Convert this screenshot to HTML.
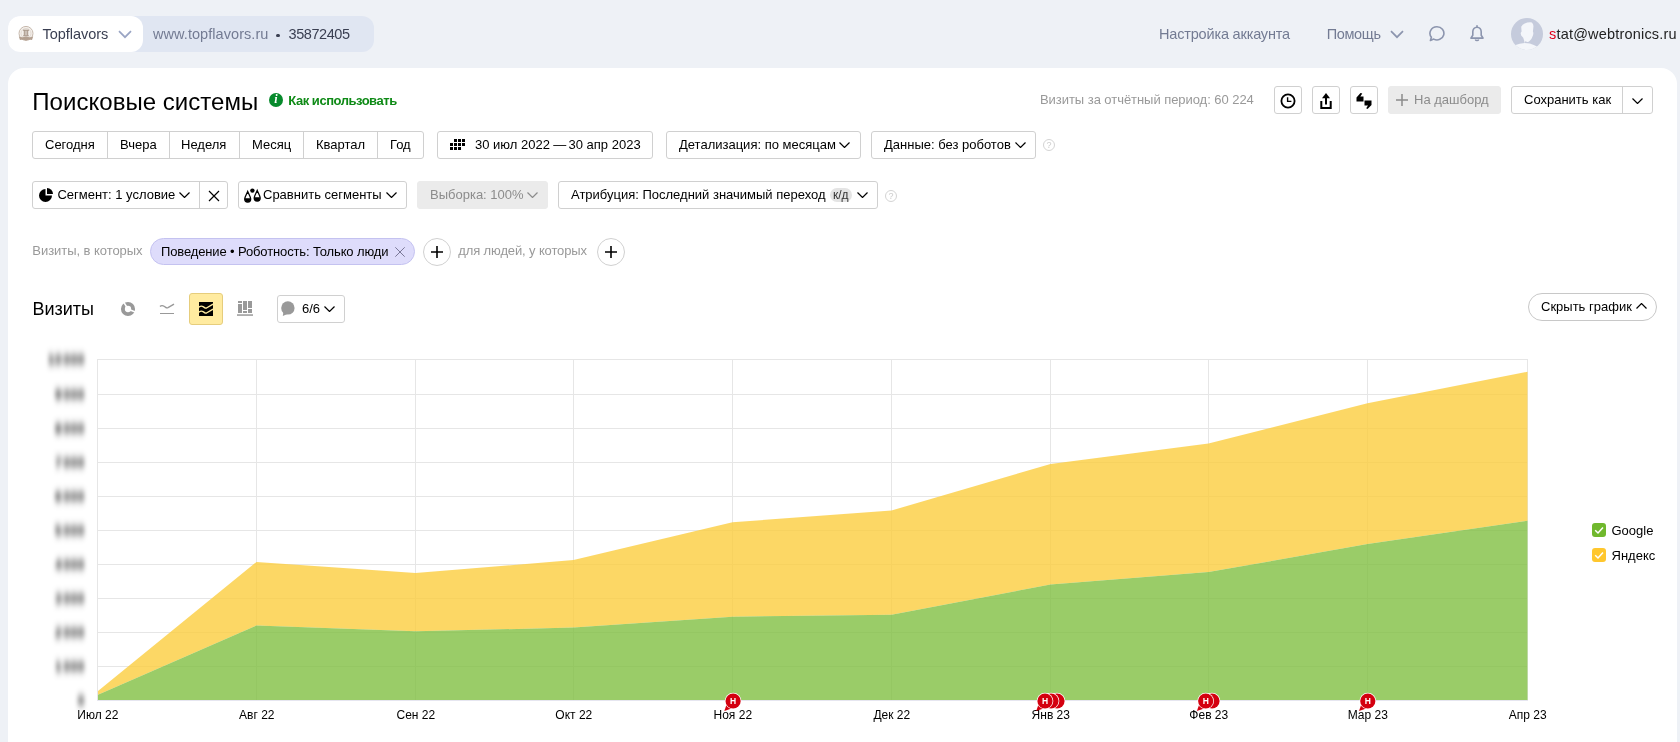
<!DOCTYPE html>
<html lang="ru">
<head>
<meta charset="utf-8">
<title>Поисковые системы</title>
<style>
*{box-sizing:border-box;margin:0;padding:0}
html,body{width:1680px;height:742px;overflow:hidden}
body{background:#eef1f6;font-family:"Liberation Sans",sans-serif;font-size:13px;color:#000;position:relative}
.abs{position:absolute;white-space:nowrap}
.panel{position:absolute;left:8px;top:68px;width:1669px;height:700px;background:#fff;border-radius:16px 16px 0 0}
/* top bar */
.pill{position:absolute;left:8px;top:16px;width:366px;height:36px;background:#e0e6f2;border-radius:12px}
.pillw{position:absolute;left:8px;top:16px;width:135px;height:36px;background:#fff;border-radius:12px}
.t15{font-size:14.5px;line-height:18px}
/* buttons */
.btn{position:absolute;height:28px;border:1px solid #d0d0d0;border-radius:3px;background:#fff;font-size:13px;line-height:26px;white-space:nowrap;color:#000}
.btn.dis{background:#ebebeb;border-color:#ebebeb;color:#8c8c8c}
.seg{position:absolute;top:0;height:26px;border-left:1px solid #d0d0d0}
.round{position:absolute;width:28px;height:28px;border:1px solid #d0d0d0;border-radius:50%;background:#fff}
.gray{color:#999}
.lh28{font-size:13px;line-height:28px}
.q{width:12px;height:12px;border:1px solid #d4d4d4;border-radius:50%;font-size:9px;line-height:10px;text-align:center;color:#ccc}
</style>
</head>
<body>
<div id="root" style="will-change:transform;position:absolute;left:0;top:0;width:1680px;height:742px;overflow:hidden">
<!-- TOP BAR -->
<div class="pill"></div>
<div class="pillw"></div>
<div class="abs t15" id="tf" style="left:42.5px;top:25px;color:#3a3f52;letter-spacing:-0.03px">Topflavors</div>
<div class="abs t15" id="url" style="left:153px;top:25px;color:#737b93;letter-spacing:0.06px">www.topflavors.ru</div>
<div class="abs" style="left:276px;top:33.500px;width:3.500px;height:3.500px;border-radius:50%;background:#3a3f52"></div>
<div class="abs t15" id="cid" style="left:288.6px;top:25px;color:#3a3f52;letter-spacing:-0.45px">35872405</div>
<div class="abs t15" id="acc" style="left:1159px;top:25px;color:#737b93;letter-spacing:-0.18px">Настройка аккаунта</div>
<div class="abs t15" id="help" style="left:1326.7px;top:25px;color:#737b93;letter-spacing:-0.34px">Помощь</div>
<div class="abs t15" id="mail" style="left:1549px;top:25px;color:#222;letter-spacing:0.19px"><span style="color:#e0001a">s</span>tat@webtronics.ru</div>

<!-- PANEL -->
<div class="panel"></div>

<div class="abs" id="title" style="left:32.3px;top:87.500px;font-size:24px;line-height:28px;letter-spacing:0.04px">Поисковые системы</div>
<div class="abs" id="how" style="left:288.3px;top:92.500px;font-size:13px;line-height:16px;color:#0e8a16;font-weight:bold;letter-spacing:-0.47px">Как использовать</div>
<div class="abs gray" id="vis" style="left:1040px;top:92px;font-size:13px;line-height:16px;letter-spacing:-0.05px">Визиты за отчётный период: 60 224</div>

<!-- ROW1 right buttons -->
<div class="btn" style="left:1274px;top:86px;width:28px"></div>
<div class="btn" style="left:1312px;top:86px;width:28px"></div>
<div class="btn" style="left:1350px;top:86px;width:28px"></div>
<svg class="abs" style="left:1274px;top:86px" width="28" height="28" viewBox="0 0 28 28"><circle cx="14" cy="15" r="6.6" fill="none" stroke="#000" stroke-width="1.8"/><path d="M13.6 11.2V15.4H17.4" fill="none" stroke="#000" stroke-width="1.4"/></svg>
<svg class="abs" style="left:1312px;top:86px" width="28" height="28" viewBox="0 0 28 28"><path d="M9.3 15v7h9.4v-7" fill="none" stroke="#000" stroke-width="2"/><path d="M14 18.5V11" stroke="#000" stroke-width="2"/><path d="M14 7l4 5.2h-8z" fill="#000"/></svg>
<svg class="abs" style="left:1350px;top:86px" width="28" height="28" viewBox="0 0 28 28"><path d="M10.5 7l-4 4.5v4h7v-5h-3.2l2-3z" fill="#000"/><path d="M14.5 14.5h7v4.5l-4 4-1.3-0.8 1.8-2.7h-3.5z" fill="#000"/></svg>
<div class="btn dis" style="left:1388px;top:86px;width:113px"></div>
<svg class="abs" style="left:1396px;top:94px" width="12" height="12" viewBox="0 0 12 12"><path d="M6 0v12M0 6h12" stroke="#8c8c8c" stroke-width="1.5"/></svg>
<div class="abs lh28" id="dash" style="left:1414px;top:86px;color:#8c8c8c">На дашборд</div>
<div class="btn" style="left:1511px;top:86px;width:142px"><div class="seg" style="left:110px"></div></div>
<div class="abs lh28" id="save" style="left:1524px;top:86px">Сохранить как</div>
<svg class="abs chev" style="left:1632px;top:98px" width="11" height="6" viewBox="0 0 11 6"><path d="M0.5 0.5l5 5 5-5" fill="none" stroke="#000" stroke-width="1.2"/></svg>

<!-- ROW2 -->
<div class="btn" style="left:32px;top:131px;width:392px">
 <div class="seg" style="left:74px"></div><div class="seg" style="left:136px"></div><div class="seg" style="left:206px"></div><div class="seg" style="left:270px"></div><div class="seg" style="left:344px"></div>
</div>
<div class="abs lh28" id="b1" style="left:45px;top:131px">Сегодня</div>
<div class="abs lh28" id="b2" style="left:120px;top:131px">Вчера</div>
<div class="abs lh28" id="b3" style="left:181px;top:131px">Неделя</div>
<div class="abs lh28" id="b4" style="left:252px;top:131px">Месяц</div>
<div class="abs lh28" id="b5" style="left:316px;top:131px">Квартал</div>
<div class="abs lh28" id="b6" style="left:390px;top:131px">Год</div>

<div class="btn" style="left:437px;top:131px;width:216px"></div>
<div class="abs lh28" id="date" style="left:475px;top:131px">30 июл 2022<span style="margin:0 2.3px 0 3.3px">—</span>30 апр 2023</div>
<div class="btn" style="left:666px;top:131px;width:195px"></div>
<div class="abs lh28" id="det" style="left:679px;top:131px">Детализация: по месяцам</div>
<svg class="abs chev" style="left:839px;top:142px" width="11" height="6" viewBox="0 0 11 6"><path d="M0.5 0.5l5 5 5-5" fill="none" stroke="#000" stroke-width="1.2"/></svg>
<div class="btn" style="left:871px;top:131px;width:165px"></div>
<div class="abs lh28" id="dat" style="left:884px;top:131px">Данные: без роботов</div>
<svg class="abs chev" style="left:1015px;top:142px" width="11" height="6" viewBox="0 0 11 6"><path d="M0.5 0.5l5 5 5-5" fill="none" stroke="#000" stroke-width="1.2"/></svg>
<div class="abs q" style="left:1043px;top:139px">?</div>

<!-- ROW3 -->
<div class="btn" style="left:32px;top:181px;width:196px"><div class="seg" style="left:166px"></div></div>
<div class="abs lh28" id="segm" style="left:57.400px;top:181px">Сегмент: 1 условие</div>
<svg class="abs chev" style="left:179px;top:192px" width="11" height="6" viewBox="0 0 11 6"><path d="M0.5 0.5l5 5 5-5" fill="none" stroke="#000" stroke-width="1.2"/></svg>
<svg class="abs" style="left:208px;top:190px" width="12" height="12" viewBox="0 0 12 12"><path d="M1 1l10 10M11 1L1 11" stroke="#000" stroke-width="1.2"/></svg>
<div class="btn" style="left:238px;top:181px;width:169px"></div>
<div class="abs lh28" id="cmp" style="left:263px;top:181px">Сравнить сегменты</div>
<svg class="abs chev" style="left:386px;top:192px" width="11" height="6" viewBox="0 0 11 6"><path d="M0.5 0.5l5 5 5-5" fill="none" stroke="#000" stroke-width="1.2"/></svg>
<div class="btn dis" style="left:417px;top:181px;width:131px"></div>
<div class="abs lh28" id="vyb" style="left:430px;top:181px;color:#8c8c8c">Выборка: 100%</div>
<svg class="abs chev" style="left:527px;top:192px" width="11" height="6" viewBox="0 0 11 6"><path d="M0.5 0.5l5 5 5-5" fill="none" stroke="#8c8c8c" stroke-width="1.2"/></svg>
<div class="btn" style="left:558px;top:181px;width:320px"></div>
<div class="abs lh28" id="attr" style="left:571px;top:181px">Атрибуция: Последний значимый переход</div>
<div class="abs" style="left:830px;top:188px;width:22px;height:14px;border-radius:7px;background:#e4e4e4"></div>
<div class="abs" id="kd" style="left:833px;top:188px;font-size:12px;line-height:14px;color:#333">к/д</div>
<svg class="abs chev" style="left:857px;top:192px" width="11" height="6" viewBox="0 0 11 6"><path d="M0.5 0.5l5 5 5-5" fill="none" stroke="#000" stroke-width="1.2"/></svg>
<div class="abs q" style="left:885px;top:190px">?</div>

<!-- ROW4 -->
<div class="abs gray" id="vk" style="left:32.3px;top:242.700px;line-height:16px;letter-spacing:-0.05px">Визиты, в которых</div>
<div class="abs" style="left:150px;top:238px;width:265px;height:27px;border-radius:13.500px;background:#dedcfb;border:1px solid #c4c2f0"></div>
<div class="abs" id="tag" style="left:161px;top:238.700px;line-height:26.500px;letter-spacing:-0.13px">Поведение • Роботность: Только люди</div>
<svg class="abs" style="left:395px;top:247px" width="10" height="10" viewBox="0 0 10 10"><path d="M0.300 0.300l9.400 9.400M9.700 0.300l-9.400 9.400" stroke="#6f6d8c" stroke-width="0.900"/></svg>
<div class="round" style="left:423px;top:238px"></div>
<svg class="abs" style="left:431px;top:246px" width="12" height="12" viewBox="0 0 12 12"><path d="M6 0v12M0 6h12" stroke="#000" stroke-width="1.6"/></svg>
<div class="abs gray" id="dl" style="left:458.3px;top:242.800px;line-height:16px;letter-spacing:-0.13px">для людей, у которых</div>
<div class="round" style="left:597px;top:238px"></div>
<svg class="abs" style="left:605px;top:246px" width="12" height="12" viewBox="0 0 12 12"><path d="M6 0v12M0 6h12" stroke="#000" stroke-width="1.6"/></svg>

<!-- ROW5 -->
<div class="abs" id="viz" style="left:32.5px;top:297px;font-size:18px;line-height:24px">Визиты</div>
<div class="abs" style="left:189px;top:293px;width:34px;height:32px;border-radius:3px;background:#ffeba0;border:1px solid #e6cd7c"></div>
<div class="btn" style="left:277px;top:295px;width:68px"></div>
<div class="abs lh28" id="s66" style="left:302px;top:295px">6/6</div>
<svg class="abs chev" style="left:324px;top:306px" width="11" height="6" viewBox="0 0 11 6"><path d="M0.5 0.5l5 5 5-5" fill="none" stroke="#000" stroke-width="1.2"/></svg>
<div class="abs" style="left:1528px;top:293px;width:129px;height:28px;border-radius:14px;border:1px solid #c8c8c8;background:#fff"></div>
<div class="abs lh28" id="hide" style="left:1541px;top:293px">Скрыть график</div>
<svg class="abs chev" style="left:1636px;top:303px" width="11" height="6" viewBox="0 0 11 6"><path d="M0.5 5.5l5-5 5 5" fill="none" stroke="#000" stroke-width="1.2"/></svg>

<!-- CHART -->
<svg class="abs" style="left:0;top:0" width="1680" height="742" viewBox="0 0 1680 742">
<style>.xl text{font:12px "Liberation Sans",sans-serif;fill:#000;text-anchor:middle}.yl text{font:bold 12px "Liberation Sans",sans-serif;fill:#000;text-anchor:end;word-spacing:-2.500px;letter-spacing:0.500px}.mk{font:bold 8.500px "Liberation Sans",sans-serif;fill:#fff;text-anchor:middle}</style>
<defs><filter id="bl" x="-20%" y="-5%" width="140%" height="110%"><feGaussianBlur stdDeviation="2.2 4.2"/></filter></defs>
<g stroke="#e6e6e6" stroke-width="1" fill="none"><path d="M97 359.5H1528"/><path d="M97 394.5H1528"/><path d="M97 428.5H1528"/><path d="M97 462.5H1528"/><path d="M97 496.5H1528"/><path d="M97 530.5H1528"/><path d="M97 564.5H1528"/><path d="M97 598.5H1528"/><path d="M97 632.5H1528"/><path d="M97 666.5H1528"/><path d="M97.5 359V700"/><path d="M256.5 359V700"/><path d="M415.5 359V700"/><path d="M573.5 359V700"/><path d="M732.5 359V700"/><path d="M891.5 359V700"/><path d="M1050.5 359V700"/><path d="M1208.5 359V700"/><path d="M1367.5 359V700"/><path d="M1527.5 359V700"/></g>
<path d="M97 700.500H1528" stroke="#e6e6f0" stroke-width="1"/>
<polygon points="98,690.9 256.5,561.9 415.5,573.1 573.5,560 732.5,522.2 891.5,510.5 1050.5,464 1208.5,443.6 1367.5,403.3 1527.5,371.8 1527.5,520.7 1367.5,544 1208.5,572.1 1050.5,584.5 891.5,614.8 732.5,616.7 573.5,627.6 415.5,631.3 256.5,625.5 98,694.8" fill="#fbcd3f" fill-opacity="0.8"/>
<polygon points="98,694.8 256.5,625.5 415.5,631.3 573.5,627.6 732.5,616.7 891.5,614.8 1050.5,584.5 1208.5,572.1 1367.5,544 1527.5,520.7 1527.5,700 98,700" fill="#81bf42" fill-opacity="0.8"/>
<g class="yl" filter="url(#bl)"><text x="85" y="364.2">10 000</text><text x="85" y="399.2">9 000</text><text x="85" y="433.2">8 000</text><text x="85" y="467.2">7 000</text><text x="85" y="501.2">6 000</text><text x="85" y="535.2">5 000</text><text x="85" y="569.2">4 000</text><text x="85" y="603.2">3 000</text><text x="85" y="637.2">2 000</text><text x="85" y="671.2">1 000</text><text x="85" y="705.2">0</text></g>
<g class="xl"><text x="97.8" y="718.8">Июл 22</text><text x="256.8" y="718.8">Авг 22</text><text x="415.8" y="718.8">Сен 22</text><text x="573.8" y="718.8">Окт 22</text><text x="732.8" y="718.8">Ноя 22</text><text x="891.8" y="718.8">Дек 22</text><text x="1050.8" y="718.8">Янв 23</text><text x="1208.8" y="718.8">Фев 23</text><text x="1367.8" y="718.8">Мар 23</text><text x="1527.8" y="718.8">Апр 23</text></g>
<g transform="translate(733.1,701)"><path d="M-6.500 3.500L-8.800 10L-1.500 7.500z" fill="#d4000f"/><circle r="8.300" fill="#fff"/><circle r="7.600" fill="#d4000f"/></g><text x="733.1" y="703.9" class="mk">Н</text><g transform="translate(1057,701)"><circle r="8.300" fill="#fff"/><circle r="7.600" fill="#d4000f"/></g><g transform="translate(1051,701)"><circle r="8.300" fill="#fff"/><circle r="7.600" fill="#d4000f"/></g><g transform="translate(1045,701)"><path d="M-6.500 3.500L-8.800 10L-1.500 7.500z" fill="#d4000f"/><circle r="8.300" fill="#fff"/><circle r="7.600" fill="#d4000f"/></g><text x="1045" y="703.9" class="mk">Н</text><g transform="translate(1212,701)"><circle r="8.300" fill="#fff"/><circle r="7.600" fill="#d4000f"/></g><g transform="translate(1205.7,701)"><path d="M-6.500 3.500L-8.800 10L-1.500 7.500z" fill="#d4000f"/><circle r="8.300" fill="#fff"/><circle r="7.600" fill="#d4000f"/></g><text x="1205.7" y="703.9" class="mk">Н</text><g transform="translate(1367.8,701)"><path d="M-6.500 3.500L-8.800 10L-1.500 7.500z" fill="#d4000f"/><circle r="8.300" fill="#fff"/><circle r="7.600" fill="#d4000f"/></g><text x="1367.8" y="703.9" class="mk">Н</text>
</svg>
<!-- LEGEND -->
<div class="abs" style="left:1592px;top:523px;width:14px;height:14px;border-radius:3px;background:#70b82d"></div>
<div class="abs" style="left:1592px;top:548px;width:14px;height:14px;border-radius:3px;background:#ffc72e"></div>
<svg class="abs" style="left:1592px;top:523px" width="14" height="14" viewBox="0 0 14 14"><path d="M3.2 7.2l2.8 2.8 5-5.6" fill="none" stroke="#fff" stroke-width="1.5"/></svg>
<svg class="abs" style="left:1592px;top:548px" width="14" height="14" viewBox="0 0 14 14"><path d="M3.2 7.2l2.8 2.8 5-5.6" fill="none" stroke="#fff" stroke-width="1.5"/></svg>
<div class="abs" id="lg1" style="left:1611.5px;top:523px;line-height:16px">Google</div>
<div class="abs" id="lg2" style="left:1611.5px;top:548px;line-height:16px">Яндекс</div>

<!-- ICONS -->
<!-- favicon crest -->
<svg class="abs" style="left:18px;top:26px" width="16" height="16" viewBox="0 0 16 16"><circle cx="8" cy="7.400" r="7" fill="#f4f0ec" stroke="#c7b9ad" stroke-width="1"/><circle cx="8" cy="7.400" r="5" fill="none" stroke="#ddd3ca" stroke-width=".8"/><path d="M5 4.200h6M6.300 4.200v5.400M9.700 4.200v5.400M8 4.200v5.400M5.200 9.800h5.600" stroke="#a39183" stroke-width="1" fill="none"/><path d="M.8 10.600c2.400 1 4.600 1 7.200 0 2.600 1 4.800 1 7.200 0l-1.200 3.400c-2-.6-4-.5-6 .5-2-1-4-1.100-6-.5z" fill="#b3a091"/></svg>
<!-- chevrons top bar -->
<svg class="abs" style="left:118px;top:30px" width="14" height="9" viewBox="0 0 14 9"><path d="M1 1.200l6 6 6-6" fill="none" stroke="#9aa5c4" stroke-width="1.700"/></svg>
<svg class="abs" style="left:1390px;top:30px" width="14" height="9" viewBox="0 0 14 9"><path d="M1 1.200l6 6 6-6" fill="none" stroke="#8c95ae" stroke-width="1.700"/></svg>
<!-- chat -->
<svg class="abs" style="left:1428px;top:25px" width="18" height="18" viewBox="0 0 18 18"><path d="M9 1.700a6.900 6.600 0 1 1-3.300 12.400l-3.300 1.300 1-3.100A6.900 6.600 0 0 1 9 1.700z" fill="none" stroke="#8c95ae" stroke-width="1.600" stroke-linejoin="round"/></svg>
<!-- bell -->
<svg class="abs" style="left:1469px;top:25px" width="16" height="18" viewBox="0 0 16 18"><path d="M8 2.200c-2.600 0-4.200 2-4.200 4.600v3.400l-1.900 2.900h12.200l-1.900-2.900V6.800c0-2.600-1.600-4.600-4.200-4.600z" fill="none" stroke="#8c95ae" stroke-width="1.600" stroke-linejoin="round"/><path d="M8 .8v1.400" stroke="#8c95ae" stroke-width="1.600" stroke-linecap="round"/><path d="M6.300 14.400a1.800 1.800 0 0 0 3.400 0" fill="none" stroke="#8c95ae" stroke-width="1.500"/></svg>
<!-- avatar -->
<svg class="abs" style="left:1511px;top:18px" width="32" height="32" viewBox="0 0 32 32"><defs><clipPath id="av"><circle cx="16" cy="16" r="16"/></clipPath></defs><circle cx="16" cy="16" r="16" fill="#c5cbdc"/><g clip-path="url(#av)" fill="#f4f6fa"><path d="M13.700 5.400Q17 4 20.900 4.400Q22.800 6.500 22.400 9L21.900 13.600L22.400 15.100Q22.300 17.200 21.400 18.700Q20.500 21.500 18.800 22.800Q17.500 24.300 16.300 24.100L14.200 23.300L13.600 25.200L13.200 22.800L12.200 19.700L10.200 17.400L9.600 15.100L10.600 13.600L10.200 8.700Q11.500 6.300 13.700 5.400z"/><path d="M3 27.600Q9 25.400 13.700 25.100L18.800 25.400Q23 26.600 26.500 28.800L29 33H3z"/></g></svg>
<!-- info i -->
<div class="abs" style="left:269px;top:93px;width:14px;height:14px;border-radius:50%;background:#078a2c"></div>
<div class="abs" style="left:269px;top:93px;width:14px;height:14px;text-align:center;font:italic bold 12px/13px 'Liberation Serif',serif;color:#fff">i</div>
<!-- calendar -->
<svg class="abs" style="left:450px;top:139px" width="15" height="11" viewBox="0 0 15 11" fill="#000"><rect x="4" y="0" width="3" height="3"/><rect x="8" y="0" width="3" height="3"/><rect x="12" y="0" width="3" height="3"/><rect x="0" y="4" width="3" height="3"/><rect x="4" y="4" width="3" height="3"/><rect x="8" y="4" width="3" height="3"/><rect x="12" y="4" width="3" height="3"/><rect x="0" y="8" width="3" height="3"/><rect x="4" y="8" width="3" height="3"/><rect x="8" y="8" width="3" height="3"/></svg>
<!-- pie -->
<svg class="abs" style="left:38px;top:187px" width="16" height="16" viewBox="0 0 16 16"><path d="M7.500 2v6.500H14A6.500 6.500 0 1 1 7.500 2z" fill="#000"/><path d="M9 1a6 6 0 0 1 6 6H9z" fill="#000"/></svg>
<!-- drops -->
<svg class="abs" style="left:243px;top:187px" width="20" height="17" viewBox="0 0 20 17"><circle cx="9.400" cy="3.600" r="2.200" fill="#000"/><path d="M4.700 4.500c1.200 3 3 5.300 3 7.500a3 3 0 0 1-6 0c0-2.200 1.800-4.500 3-7.500z" fill="#fff" stroke="#000" stroke-width="1.300"/><path d="M2 11.200h5.400c.300 2-.8 3.600-2.700 3.600s-3-1.600-2.700-3.600z" fill="#000"/><path d="M14.200 3.500c1.200 3 3 5.300 3 7.500a3 3 0 0 1-6 0c0-2.200 1.800-4.500 3-7.500z" fill="#fff" stroke="#000" stroke-width="1.300"/><path d="M11.500 10.200h5.400c.300 2-.8 3.600-2.700 3.600s-3-1.600-2.700-3.600z" fill="#000"/></svg>
<!-- donut -->
<svg class="abs" style="left:120px;top:301px" width="16" height="16" viewBox="0 0 16 16"><circle cx="8" cy="8" r="5.100" fill="none" stroke="#999" stroke-width="3.900"/><path d="M8 8L3.200 0.400M8 8L15.800 11.200M8 8L11 9.500" stroke="#fff" stroke-width="1.600"/></svg>
<!-- line -->
<svg class="abs" style="left:159px;top:301px" width="16" height="16" viewBox="0 0 16 16"><path d="M1 5.500c1.500-1.500 3-1 4.500 0s2 1.800 3.500 1.200L15 3.200" fill="none" stroke="#999" stroke-width="1.400"/><path d="M1 12.500h14" stroke="#999" stroke-width="1"/></svg>
<!-- area (active) -->
<svg class="abs" style="left:199px;top:302px" width="14" height="14" viewBox="0 0 14 14"><rect width="14" height="14" fill="#000"/><path d="M0 5.200c1.500-1.500 3-1.300 4.500-.3s2 1.600 3 1.100L14 2.200" fill="none" stroke="#ffeba0" stroke-width="1.400"/><path d="M0 10.200c1.500-1.500 3-1.300 4.500-.3s2 1.600 3 1.100L14 7.200" fill="none" stroke="#ffeba0" stroke-width="1.400"/></svg>
<!-- stacked bars -->
<svg class="abs" style="left:237px;top:301px" width="16" height="15" viewBox="0 0 16 15" fill="#999"><rect x="1" y="0" width="4" height="2"/><rect x="1" y="3" width="4" height="9"/><rect x="6" y="0" width="4" height="9"/><rect x="6" y="10" width="4" height="2"/><rect x="11" y="0" width="4" height="7"/><rect x="11" y="8" width="4" height="4"/><rect x="0" y="13.300" width="16" height="1.500"/></svg>
<!-- bubble gray -->
<svg class="abs" style="left:280px;top:300px" width="16" height="17" viewBox="0 0 16 17"><circle cx="7.900" cy="7.900" r="6.700" fill="#999"/><path d="M3.500 11.500L2.800 16l4.500-2z" fill="#999"/></svg>

</div>
</body>
</html>
